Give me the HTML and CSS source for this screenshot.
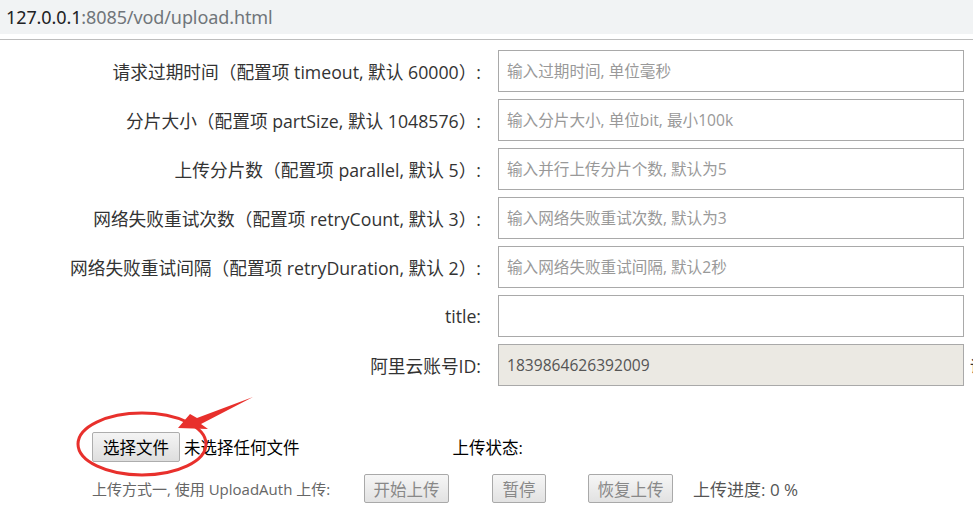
FILE: index.html
```html
<!DOCTYPE html>
<html lang="zh-CN">
<head>
<meta charset="utf-8">
<title>upload</title>
<link rel="stylesheet" href="styles.css">
</head>
<body>
<div class="page">
  <div class="addressbar"><span class="host">127.0.0.1</span><span class="path">:8085/vod/upload.html</span></div>
  <div class="divider"></div>
  <form class="form">
    <label class="lbl">请求过期时间（配置项 timeout, 默认 60000）:</label>
    <input class="inp" type="text" placeholder="输入过期时间, 单位毫秒">
    <span class="extra"></span>

    <label class="lbl">分片大小（配置项 partSize, 默认 1048576）:</label>
    <input class="inp" type="text" placeholder="输入分片大小, 单位bit, 最小100k">
    <span class="extra"></span>

    <label class="lbl">上传分片数（配置项 parallel, 默认 5）:</label>
    <input class="inp" type="text" placeholder="输入并行上传分片个数, 默认为5">
    <span class="extra"></span>

    <label class="lbl">网络失败重试次数（配置项 retryCount, 默认 3）:</label>
    <input class="inp" type="text" placeholder="输入网络失败重试次数, 默认为3">
    <span class="extra"></span>

    <label class="lbl">网络失败重试间隔（配置项 retryDuration, 默认 2）:</label>
    <input class="inp" type="text" placeholder="输入网络失败重试间隔, 默认2秒">
    <span class="extra"></span>

    <label class="lbl">title:</label>
    <input class="inp" type="text">
    <span class="extra"></span>

    <label class="lbl">阿里云账号ID:</label>
    <input class="inp inp-disabled" type="text" value="1839864626392009" readonly>
    <span class="extra">请</span>
  </form>

  <div class="filerow">
    <span class="filebtn">选择文件</span>
    <span class="filename">未选择任何文件</span>
    <span class="status">上传状态:</span>
  </div>
  <div class="actions">
    <span class="mode">上传方式一, 使用 UploadAuth 上传:</span>
    <span class="btn btn-start">开始上传</span>
    <span class="btn btn-pause">暂停</span>
    <span class="btn btn-resume">恢复上传</span>
    <span class="progress">上传进度: 0 %</span>
  </div>

  <svg class="annot" width="973" height="517" viewBox="0 0 973 517">
    <ellipse cx="142" cy="444" rx="64" ry="31" fill="none" stroke="#e8302c" stroke-width="3"/>
    <polygon points="178,428 190,414 197,418 253,397 201,424 208,429" fill="#e8302c"/>
  </svg>
</div>
</body>
</html>
```

FILE: styles.css
```css
html, body {
  margin: 0;
  padding: 0;
  background: #fff;
  overflow: hidden;
}
.page {
  position: relative;
  width: 973px;
  height: 517px;
  overflow: hidden;
  font-family: "Open Sans", "Noto Sans CJK SC", sans-serif;
  color: #333;
}
.addressbar {
  height: 34px;
  background: #f1f3f4;
  display: flex;
  align-items: center;
  padding-left: 6px;
  font-family: "Noto Sans", "Noto Sans CJK SC", sans-serif;
  font-size: 18px;
  letter-spacing: -0.1px;
}
.host { color: #202124; }
.path { color: #70757a; }
.divider {
  margin-top: 5px;
  height: 1px;
  background: #bdbdbd;
}
.form {
  margin-top: 10px;
  display: grid;
  grid-template-columns: 498px 466px auto;
  grid-auto-rows: 42px;
  row-gap: 7px;
  align-items: center;
}
.lbl {
  text-align: right;
  padding-right: 17px;
  font-size: 17.7px;
  color: #333;
  white-space: nowrap;
}
.inp {
  box-sizing: border-box;
  width: 466px;
  height: 42px;
  margin: 0;
  border: 1px solid #a9a9a9;
  border-radius: 0;
  padding: 0 8px;
  font-family: "Open Sans", "Noto Sans CJK SC", sans-serif;
  font-size: 15.6px;
  color: #555;
  background: #fff;
  outline: none;
}
.inp::placeholder { color: #999; }
.inp-disabled { background: #ebe9e3; color: #555; }
.extra {
  margin-left: 6px;
  font-size: 16px;
  white-space: nowrap;
  color: #333;
}
.filerow {
  margin-top: 46px;
  display: flex;
  align-items: center;
  padding-left: 92px;
  height: 30px;
  font-size: 16.5px;
  color: #000;
}
.filebtn {
  box-sizing: border-box;
  width: 88px;
  height: 30px;
  display: flex;
  align-items: center;
  justify-content: center;
  border: 1px solid #adadad;
  border-radius: 2px;
  background: linear-gradient(#f4f4f4, #dedede);
  color: #000;
}
.filename { margin-left: 4px; }
.status { margin-left: 153px; }
.actions {
  margin-top: 12px;
  display: flex;
  align-items: center;
  padding-left: 92px;
  height: 29px;
}
.mode {
  font-size: 15px;
  color: #666;
  width: 272px;
  white-space: nowrap;
}
.btn {
  box-sizing: border-box;
  height: 29px;
  display: flex;
  align-items: center;
  justify-content: center;
  border: 1px solid #a9a9a9;
  border-radius: 2px;
  background: linear-gradient(#f6f6f6, #e2e2e2);
  color: #888;
  font-size: 16.5px;
}
.btn-start { width: 85px; }
.btn-pause { width: 54px; margin-left: 43px; }
.btn-resume { width: 85px; margin-left: 42px; }
.progress {
  margin-left: 20px;
  font-size: 17px;
  color: #555;
}
.annot {
  position: absolute;
  left: 0;
  top: 0;
  pointer-events: none;
}
```
